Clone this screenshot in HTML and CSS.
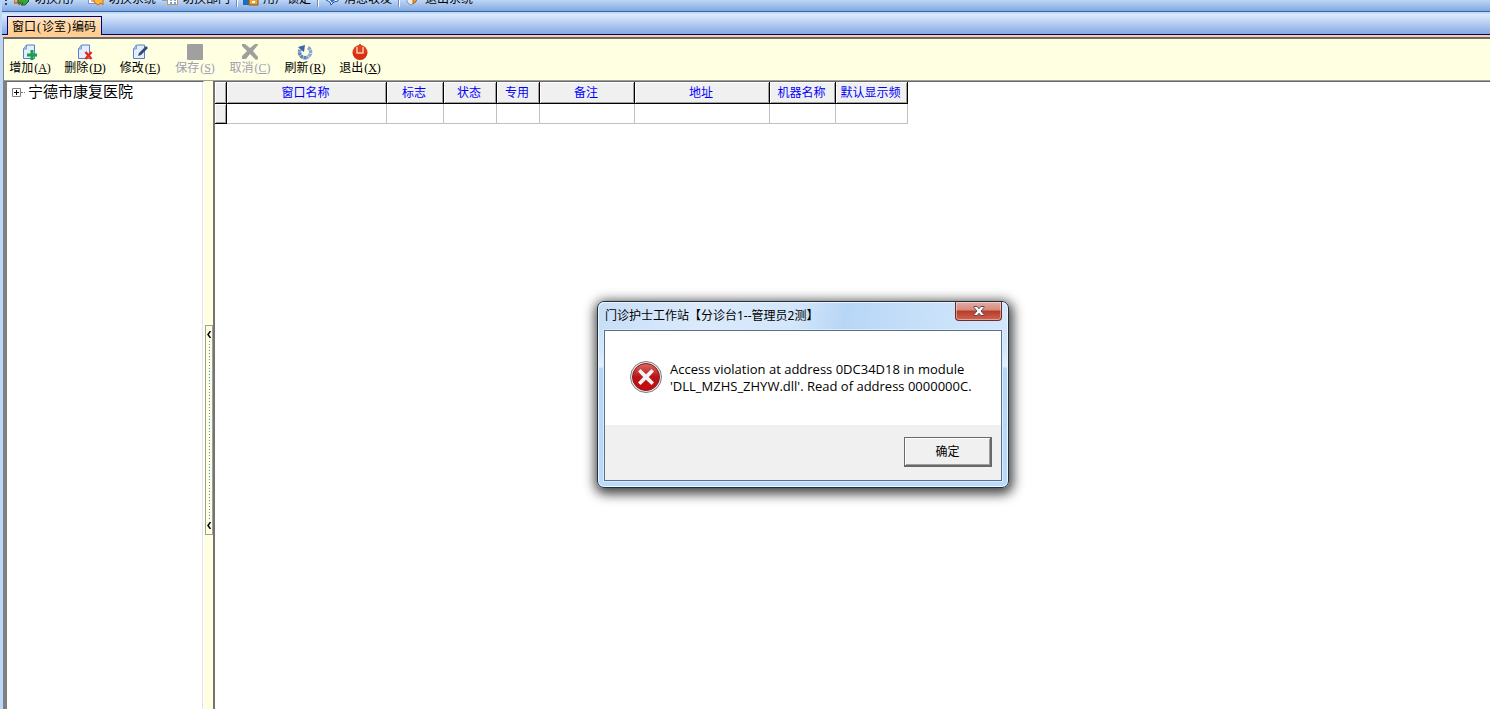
FILE: index.html
```html
<!DOCTYPE html>
<html lang="zh-CN">
<head>
<meta charset="utf-8">
<title>窗口(诊室)编码</title>
<link rel="stylesheet" href="styles.css">
</head>
<body>
<div class="app">
  <nav class="menu">
    <span class="grip"></span>
    <button class="menu-item"><svg width="16" height="16" viewBox="0 0 16 16"><path d="M0 9h5V6l5 4-5 5v-2H0z" fill="#f5a55a" stroke="#a44d1c"/><path d="M4 9h6V6l5 5-4 4H7l2-2H4z" fill="#37a53a" stroke="#186024"/></svg>切换用户</button>
    <button class="menu-item"><svg width="16" height="16" viewBox="0 0 16 16"><path d="M.5 1.5h12v12H.5z" fill="#fff" stroke="#7690c8"/><path d="M3 11h3" stroke="#e04b30"/><path d="M6 9h5V6l4 4v5l-2-2-3 2-4-3z" fill="#ffb83a" stroke="#c56b10"/></svg>切换系统</button>
    <button class="menu-item"><svg width="16" height="16" viewBox="0 0 16 16"><path d="M5.500 2.500h10v12h-10z" fill="#fff" stroke="#b59b60"/><path d="M0 10h5" stroke="#666"/><path d="M8 10h2m2 0h2m-6 3h2m2 0h2" stroke="#7da0df" stroke-width="2"/></svg>切换部门</button>
    <span class="menu-sep"></span>
    <button class="menu-item"><svg width="16" height="16" viewBox="0 0 16 16"><path d="M0 15V9l4-3h6v9z" fill="#1c6cc4"/><path d="M6 8h9v7H6z" fill="#eba43a" stroke="#8a5418"/><path d="M9 11h3v2H9z" fill="#fff"/></svg>用户锁定</button>
    <span class="menu-sep"></span>
    <button class="menu-item"><svg width="16" height="16" viewBox="0 0 16 16"><path d="M2 3h12v8l-4 1-3 3-1-3-4-2z" fill="#fff" stroke="#2454b4"/><path d="M6 10h5l-3 3z" fill="#3167cb"/></svg>消息收发</button>
    <span class="menu-sep"></span>
    <button class="menu-item"><svg width="16" height="16" viewBox="0 0 16 16"><path d="M2 3h9v9l-5 3-4-3z" fill="#e9edf5" stroke="#8994ab"/><path d="M8 8l4 2-4 4z" fill="#f0a020" stroke="#a76b19"/></svg>退出系统</button>
  </nav>

  <div class="tabs">
    <button class="tab">窗口<span class="paren">(</span>诊室<span class="paren">)</span>编码</button>
  </div>

  <main class="frame">
    <div class="toolbar">
      <button class="tool"><svg width="16" height="16" viewBox="0 0 16 16"><path d="M4.500 1h8v13.500h-11V5z" fill="#e3edfb" stroke="#557fc8"/><path d="M1.500 5h3V1z" fill="#b5ccef" stroke="#7a9dd8"/><path d="M10 6v10M5 11h10" stroke="#18a050" stroke-width="3"/></svg><span>增加<span class="key">(<u>A</u>)</span></span></button>
      <button class="tool"><svg width="16" height="16" viewBox="0 0 16 16"><path d="M4.500 1h8v13.500h-11V5z" fill="#e3edfb" stroke="#557fc8"/><path d="M1.500 5h3V1z" fill="#b5ccef" stroke="#7a9dd8"/><path d="M8.500 8l6 7m0-7l-6 7" stroke="#e32b25" stroke-width="2.500"/></svg><span>删除<span class="key">(<u>D</u>)</span></span></button>
      <button class="tool"><svg width="16" height="16" viewBox="0 0 16 16"><path d="M4.500 1h8v13.500h-11V5z" fill="#e3edfb" stroke="#557fc8"/><path d="M1.500 5h3V1z" fill="#b5ccef" stroke="#7a9dd8"/><path d="M6 12l1-3 7-7 2 2-7 7z" fill="#34477e"/></svg><span>修改<span class="key">(<u>E</u>)</span></span></button>
      <button class="tool" disabled><svg width="16" height="16" viewBox="0 0 16 16"><rect width="16" height="16" rx="1" fill="#a0a0a0"/></svg><span>保存<span class="key">(<u>S</u>)</span></span></button>
      <button class="tool" disabled><svg width="16" height="16" viewBox="0 0 16 16"><path d="M0 0h3l5 4 5-4h3v1l-5 6 5 6v2l-2 1-6-6-4 5H0v-3l5-5-5-5z" fill="#a0a0a0"/></svg><span>取消<span class="key">(<u>C</u>)</span></span></button>
      <button class="tool"><svg width="16" height="16" viewBox="0 0 16 16"><path d="M11 3.500a5.500 5.500 0 0 1-1.500 10" fill="none" stroke="#8aa6d3" stroke-width="3.500" stroke-dasharray="3 .5"/><path d="M9.500 13.500A5.500 5.500 0 0 1 3 6" fill="none" stroke="#5b83be" stroke-width="3.500" stroke-dasharray="3 .5"/><path d="M1 3l7-2-1 7-3-2z" fill="#3a67a8"/></svg><span>刷新<span class="key">(<u>R</u>)</span></span></button>
      <button class="tool"><svg width="16" height="16" viewBox="0 0 16 16"><circle cx="8" cy="8.500" r="7.500" fill="#e23c1a"/><path d="M.5 8.500a7.500 7.500 0 0 0 15 0z" fill="#c72211" opacity=".5"/><path d="M5 3v6h6V3" fill="none" stroke="#fbc9a4" stroke-width="1.500"/><path d="M8 0v8" stroke="#c9502c" stroke-width="2"/></svg><span>退出<span class="key">(<u>X</u>)</span></span></button>
    </div>

    <div class="work">
      <aside class="tree">
        <div class="node">
          <button class="expander" aria-label="展开"><svg width="9" height="9" viewBox="0 0 9 9"><path d="M.5.5h8v8h-8z" fill="#fff" stroke="#808080"/><path d="M2 4.500h5M4.500 2v5" stroke="#000"/></svg></button>
          <span class="stub"></span>
          <span class="node-name">宁德市康复医院</span>
        </div>
      </aside>
      <div class="splitter">
        <button class="handle" aria-label="收起">
          <svg width="4" height="7" viewBox="0 0 4 7"><path d="M3.500 0L1 3.500 3.500 7" fill="none" stroke="#000" stroke-width="1.500"/></svg>
          <span class="dots"></span>
          <svg width="4" height="7" viewBox="0 0 4 7"><path d="M3.500 0L1 3.500 3.500 7" fill="none" stroke="#000" stroke-width="1.500"/></svg>
        </button>
      </div>
      <section class="grid-pane">
        <table class="grid">
          <colgroup><col class="c-mark"><col class="c-name"><col class="c-flag"><col class="c-state"><col class="c-use"><col class="c-note"><col class="c-addr"><col class="c-host"><col class="c-freq"></colgroup>
          <thead><tr><th></th><th>窗口名称</th><th>标志</th><th>状态</th><th>专用</th><th>备注</th><th>地址</th><th>机器名称</th><th>默认显示频</th></tr></thead>
          <tbody><tr><th></th><td></td><td></td><td></td><td></td><td></td><td></td><td></td><td></td></tr></tbody>
        </table>
      </section>
    </div>
  </main>
</div>

<div class="dialog" role="alertdialog" aria-labelledby="dlg-title" aria-describedby="dlg-text">
  <header class="dialog-head">
    <span class="dialog-title" id="dlg-title">门诊护士工作站【分诊台1--管理员2测】</span>
    <button class="close" aria-label="关闭"><svg width="12" height="10" viewBox="0 0 12 10"><path d="M1 .5h3.200L6 2.800 7.800.5H11v1L8 5l3 3.500v1H7.800L6 7.200 4.200 9.500H1v-1L4 5 1 1.500z" fill="#fff" stroke="#5a4b55"/></svg></button>
  </header>
  <div class="dialog-body">
    <div class="message">
      <svg width="32" height="32" viewBox="0 0 32 32"><defs><linearGradient id="red" x1="0" y1="0" x2="0" y2="1"><stop offset="0" stop-color="#dc6a68"/><stop offset=".5" stop-color="#b81418"/><stop offset="1" stop-color="#c90a0a"/></linearGradient></defs><circle cx="16" cy="16" r="15.500" fill="#e6e6e6" stroke="#808080"/><circle cx="16" cy="16" r="13.500" fill="url(#red)" stroke="#8c1a1a"/><path d="M10.500 8L16 13.200 21.500 8 24 10.500 18.800 16 24 21.500 21.500 24 16 18.800 10.500 24 8 21.500 13.200 16 8 10.500z" fill="#f4f4f4"/></svg>
      <p class="message-text" id="dlg-text">Access violation at address 0DC34D18 in module<br>'DLL_MZHS_ZHYW.dll'. Read of address 0000000C.</p>
    </div>
    <footer class="dialog-foot"><button class="ok">确定</button></footer>
  </div>
</div>
</body>
</html>
```
FILE: styles.css
```css
* { box-sizing: border-box; }
body {
  margin: 0;
  background: #fff;
  color: #000;
  font: 12px/14px "Liberation Serif", "Noto Sans CJK SC", sans-serif;
}
button { margin: 0; padding: 0; border: 0; background: none; color: inherit; font: inherit; }
svg { display: block; flex: none; }

.app {
  display: flex;
  flex-direction: column;
  height: 100vh;
  padding-left: 2px;
  background: #bcd6f8;
  overflow: hidden;
}

.menu {
  display: flex;
  flex: none;
  align-items: flex-end;
  gap: 6px;
  height: 12px;
  padding: 0 0 5px 3px;
  border-bottom: 1px solid #3567a4;
  background: linear-gradient(#bed6f6, #82a9e2);
  overflow: hidden;
}
.grip {
  width: 2px;
  height: 15px;
  margin-right: 1px;
  background: repeating-linear-gradient(#27417e 0 2px, transparent 2px 4px);
}
.menu-item { display: flex; flex: none; align-items: flex-end; gap: 4px; white-space: nowrap; }
.menu-sep { width: 1px; height: 17px; background: #6a8ccb; box-shadow: 1px 0 #fff; margin-bottom: -1px; }

.tabs {
  display: flex;
  flex: none;
  align-items: flex-end;
  height: 23px;
  padding: 0 5px;
  border-top: 2px solid #c4dbf9;
  border-bottom: 1px solid #00007c;
  background: linear-gradient(#dfecfd, #86aae4);
}
.tab {
  height: 19px;
  margin-bottom: -1px;
  padding: 2px 5px 0 4px;
  border: 1px solid #00007c;
  border-bottom: 0;
  background: linear-gradient(#ffe6c2, #ffcb8c);
  white-space: nowrap;
}
.paren { padding: 0 1px; }

.frame {
  display: flex;
  flex: 1;
  flex-direction: column;
  min-height: 0;
  border-top: 2px solid #ffcf94;
}
.toolbar {
  display: flex;
  flex: none;
  gap: 5px;
  height: 43px;
  margin-left: 1px;
  padding: 5px 0 0 1px;
  border-top: 2px solid #6b6b6b;
  border-left: 1px solid #808080;
  background: #ffffe1;
}
.tool { display: flex; flex-direction: column; align-items: center; gap: 1px; width: 50px; white-space: nowrap; }
.tool:disabled { color: #a0a0a0; text-shadow: 1px 1px #fff; }
.key { padding-left: 1px; }

.work {
  display: flex;
  flex: 1;
  min-height: 0;
  margin-left: 1px;
  border-left: 2px solid #808080;
  border-top: 1px solid #a0a0a0;
  background: #ffffe1;
}
.tree {
  flex: none;
  width: 199px;
  padding: 1px 0 0 5px;
  border-top: 1px solid #696969;
  border-left: 2px solid #808080;
  border-right: 1px solid #fff;
  background: #fff;
  box-shadow: inset -1px 0 #e3e3e3;
}
.node { display: flex; align-items: center; height: 18px; }
.stub { width: 4px; border-top: 1px dotted #808080; }
.node-name { padding-left: 3px; font-size: 15px; line-height: 18px; white-space: nowrap; }

.splitter { flex: none; width: 9px; padding-top: 244px; }
.handle {
  display: flex;
  flex-direction: column;
  align-items: center;
  width: 8px;
  height: 210px;
  margin-left: 1px;
  padding: 5px 0;
  border: 1px solid #a0a0a0;
  background: #ffffe1;
}
.dots { flex: 1; width: 1px; margin: 3px 0; background: repeating-linear-gradient(#4a90d9 0 1px, transparent 1px 3px); }

.grid-pane {
  flex: 1;
  min-width: 0;
  border-left: 2px solid #737373;
  border-top: 1px solid #696969;
  background: #fff;
}
.grid { width: 693px; border-collapse: separate; border-spacing: 0; table-layout: fixed; }
.grid th {
  height: 22px;
  padding: 0 2px 0 0;
  border-right: 1px solid #000;
  border-bottom: 1px solid #000;
  background: #f0f0f0;
  box-shadow: inset 1px 1px #fff, inset -1px -1px #a0a0a0;
  color: #00f;
  font-weight: 400;
  white-space: nowrap;
}
.grid tbody th { height: 20px; }
.grid td { height: 20px; padding: 0; border-right: 1px solid #c0c0c0; border-bottom: 1px solid #c0c0c0; }
.c-mark { width: 12px; }
.c-name { width: 160px; }
.c-flag { width: 57px; }
.c-state { width: 53px; }
.c-use { width: 43px; }
.c-note { width: 95px; }
.c-addr { width: 135px; }
.c-host { width: 66px; }
.c-freq { width: 72px; }

.dialog {
  position: absolute;
  left: 597px;
  top: 301px;
  width: 412px;
  padding: 0 6px 6px;
  border: 1px solid #22303e;
  border-radius: 7px;
  background: linear-gradient(#c3def8 0, #d3e7fb 50px, #e4f1fd 64px, #b4d6f8 67px, #b9dafa);
  box-shadow: inset 0 0 0 1px #ecf6ff, 1px 3px 12px 3px rgba(0, 0, 0, .75);
  font-family: "Noto Sans", "Noto Sans CJK SC", sans-serif;
}
.dialog-head {
  display: flex;
  align-items: flex-start;
  justify-content: space-between;
  height: 28px;
  margin: 0 -5px;
  padding: 0 5px;
  background: linear-gradient(100deg, #c6def8 0, #dbeafb 25%, #d3e6fb 48%, #b7d6f6 60%, #c6dff9 78%, #d2e7fc);
  border-radius: 6px 6px 0 0;
  box-shadow: inset 0 1px #eaf4ff;
}
.dialog-title { padding: 6px 0 0 1px; line-height: 16px; white-space: nowrap; }
.close {
  display: flex;
  align-items: center;
  justify-content: center;
  width: 47px;
  height: 19px;
  border: 1px solid #6d2c2c;
  border-top: 0;
  border-radius: 0 0 4px 4px;
  background: linear-gradient(#e6aca2 0, #d48a7d 45%, #b93b28 50%, #cf6550 100%);
  box-shadow: inset 0 0 0 1px rgba(255, 255, 255, .4);
}
.dialog-body { border: 1px solid #5d6f84; background: #fff; box-shadow: 0 0 0 1px #d9ecff; }
.message { display: flex; gap: 8px; height: 94px; padding: 30px 25px 0; }
.message-text { margin: 0; font-family: "Open Sans", sans-serif; font-size: 13px; line-height: 17px; white-space: nowrap; }
.dialog-foot { display: flex; justify-content: flex-end; height: 55px; padding: 12px 9px 0; background: #f0f0f0; }
.ok {
  width: 88px;
  height: 30px;
  border: 1px solid #696969;
  border-right-width: 2px;
  border-bottom-width: 2px;
  background: #f0f0f0;
  box-shadow: inset 1px 1px #fff, inset -1px -1px #a0a0a0;
}
```
